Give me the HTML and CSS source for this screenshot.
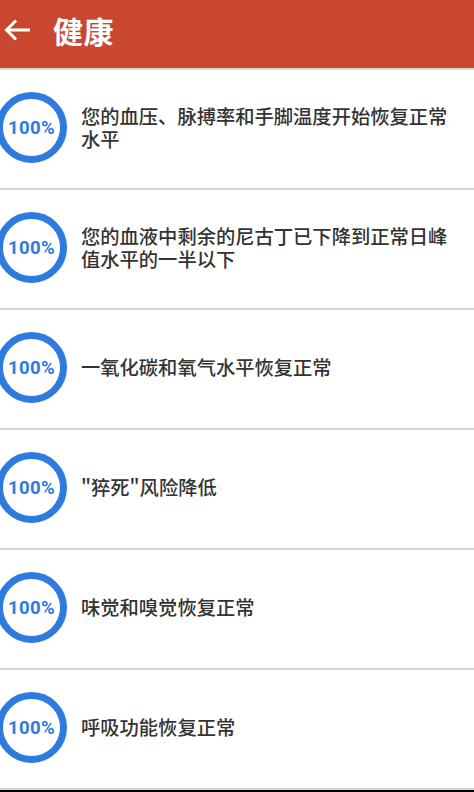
FILE: index.html
```html
<!DOCTYPE html>
<html lang="zh">
<head>
<meta charset="utf-8">
<title>健康</title>
<link rel="stylesheet" href="styles.css">
</head>
<body>
<div class="app">
  <header class="bar">
    <svg class="back" width="26" height="22" viewBox="0 0 26 22" aria-hidden="true">
      <path d="M25 11H3M11 2.5L2.5 11L11 19.5" fill="none" stroke="#fff" stroke-width="3" stroke-linecap="square"/>
    </svg>
    <h1 class="title">健康</h1>
  </header>
  <ul class="list">
    <li class="row"><div class="ring">100%</div><p class="txt">您的血压、脉搏率和手脚温度开始恢复正常水平</p></li>
    <li class="row"><div class="ring">100%</div><p class="txt">您的血液中剩余的尼古丁已下降到正常日峰值水平的一半以下</p></li>
    <li class="row"><div class="ring">100%</div><p class="txt">一氧化碳和氧气水平恢复正常</p></li>
    <li class="row"><div class="ring">100%</div><p class="txt">"猝死"风险降低</p></li>
    <li class="row"><div class="ring">100%</div><p class="txt">味觉和嗅觉恢复正常</p></li>
    <li class="row"><div class="ring">100%</div><p class="txt">呼吸功能恢复正常</p></li>
  </ul>
</div>
</body>
</html>
```

FILE: styles.css
```css
* { box-sizing: border-box; }
html, body { margin: 0; padding: 0; }
body {
  background: #000;
  font-family: "Noto Sans CJK SC", "Noto Sans", sans-serif;
  overflow: hidden;
}
.app {
  width: 474px;
  background: #fff;
}
.bar {
  height: 70px;
  background: #c9462f;
  border-bottom: 2px solid #d6d6d6;
  display: flex;
  align-items: center;
  padding-left: 4px;
  padding-bottom: 9px;
}
.back { display: block; flex: none; }
.title {
  margin: 0 0 0 23px;
  color: #fff;
  font-size: 30px;
  font-weight: 700;
  line-height: 1;
  letter-spacing: 0.5px;
}
.list {
  list-style: none;
  margin: 0;
  padding: 0;
}
.row {
  height: 120px;
  border-bottom: 2px solid #d4d4d4;
  display: flex;
  align-items: center;
  padding-right: 14px;
  padding-bottom: 3px;
}
.ring {
  flex: none;
  width: 71px;
  height: 71px;
  margin-left: -4px;
  border: 7px solid #2e7be0;
  border-radius: 50%;
  display: flex;
  align-items: center;
  justify-content: center;
  color: #2e7be0;
  font-family: Roboto, "Liberation Sans", sans-serif;
  font-weight: 700;
  font-size: 18.5px;
  letter-spacing: 0.4px;
}
.txt {
  margin: 0 0 0 14px;
  color: #333;
  font-size: 19.3px;
  font-weight: 500;
  line-height: 23px;
}
```
